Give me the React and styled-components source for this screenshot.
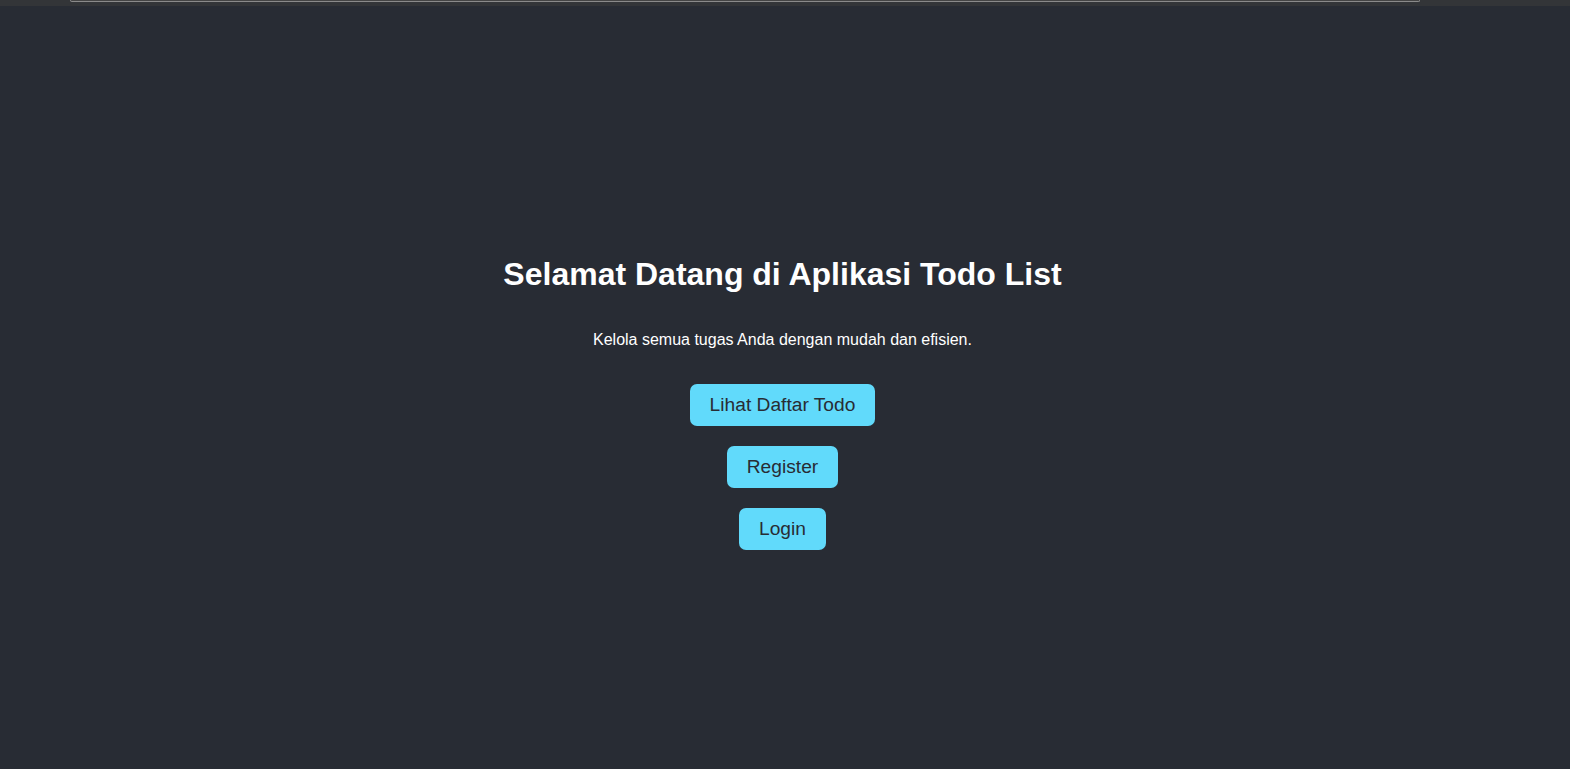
import React from "react"
import styled, { createGlobalStyle } from "styled-components"

const GlobalStyle = createGlobalStyle`
  body {
    margin: 0;
    background: #282c34;
    font-family: "Liberation Sans", Arial, sans-serif;
  }
`

const Page = styled.div`
  min-height: 100vh;
  display: flex;
  flex-direction: column;
  background-color: #282c34;
`

const TopStrip = styled.div`
  height: 6px;
  background: #333538;
  padding: 0 150px 0 70px;
`

const TopField = styled.div`
  height: 1px;
  border: 1px solid #8a8a8a;
  border-top: none;
  border-radius: 0 0 6px 6px;
  background: #444;
`

const Header = styled.header`
  flex: 1;
  display: flex;
  flex-direction: column;
  align-items: center;
  justify-content: center;
  color: #fff;
  padding: 41px 5px 0 0;
`

const Title = styled.h1`
  font-size: 32px;
  font-weight: bold;
  margin: 0 0 38px;
`

const Lead = styled.p`
  font-size: 16px;
  margin: 0 0 25px;
`

const Button = styled.button`
  font-family: "Liberation Sans", Arial, sans-serif;
  font-size: 19.2px;
  line-height: 22px;
  padding: 10px 20px;
  margin: 10px 0;
  border: none;
  border-radius: 7px;
  background-color: #61dafb;
  color: #282c34;
  cursor: pointer;
`

const App = () => {
  return (
    <>
      <GlobalStyle />
      <Page>
        <TopStrip>
          <TopField />
        </TopStrip>
        <Header>
          <Title>Selamat Datang di Aplikasi Todo List</Title>
          <Lead>Kelola semua tugas Anda dengan mudah dan efisien.</Lead>
          <Button>Lihat Daftar Todo</Button>
          <Button>Register</Button>
          <Button>Login</Button>
        </Header>
      </Page>
    </>
  )
}

export default App
